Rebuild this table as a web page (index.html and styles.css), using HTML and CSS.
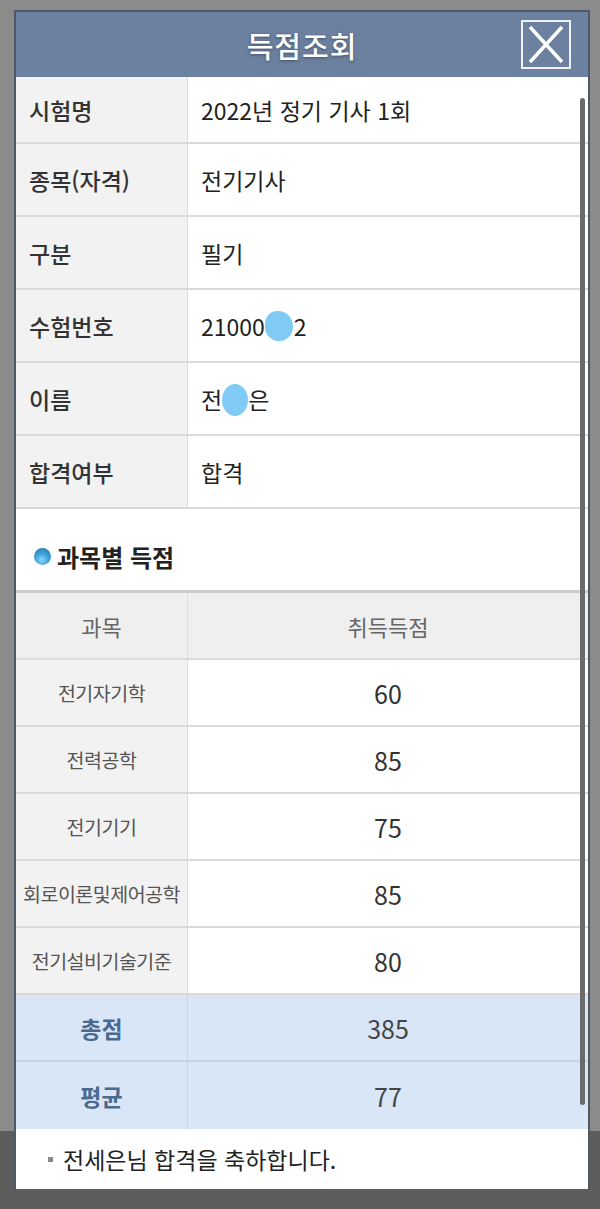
FILE: index.html
```html
<!DOCTYPE html>
<html lang="ko">
  <head>
    <meta charset="UTF-8" />
    <meta name="viewport" content="width=device-width, initial-scale=1.0" />
    <title>득점조회</title>
    <link rel="stylesheet" href="styles.css">
  </head>
  <body>
    <div class="backdrop">
      <div class="modal">
        <div class="modal-header">
          <span></span>
          <h1>득점조회</h1>
          <button class="close" type="button" aria-label="닫기">
            <svg width="50" height="49" viewBox="0 0 50 49">
              <rect x="1" y="1" width="48" height="47" fill="none" stroke="#eef1f6" stroke-width="2" />
              <path d="M9 7 L41 42 M41 7 L9 42" stroke="#ffffff" stroke-width="3.5" />
            </svg>
          </button>
        </div>

        <div class="modal-body">
          <div class="info">
            <div class="info-row first">
              <div class="label">시험명</div>
              <div class="value">2022년 정기 기사 1회</div>
            </div>
            <div class="info-row">
              <div class="label">종목(자격)</div>
              <div class="value">전기기사</div>
            </div>
            <div class="info-row">
              <div class="label">구분</div>
              <div class="value">필기</div>
            </div>
            <div class="info-row">
              <div class="label">수험번호</div>
              <div class="value">21000<span class="blob num"></span>2</div>
            </div>
            <div class="info-row">
              <div class="label">이름</div>
              <div class="value">전<span class="blob name"></span>은</div>
            </div>
            <div class="info-row">
              <div class="label">합격여부</div>
              <div class="value">합격</div>
            </div>
          </div>

          <div class="section-title">
            <span class="ball"></span>
            <h2>과목별 득점</h2>
          </div>

          <div class="scores">
            <div class="score-row head">
              <div class="subject">과목</div>
              <div class="point">취득득점</div>
            </div>
            <div class="score-row">
              <div class="subject">전기자기학</div>
              <div class="point">60</div>
            </div>
            <div class="score-row">
              <div class="subject">전력공학</div>
              <div class="point">85</div>
            </div>
            <div class="score-row">
              <div class="subject">전기기기</div>
              <div class="point">75</div>
            </div>
            <div class="score-row">
              <div class="subject">회로이론및제어공학</div>
              <div class="point">85</div>
            </div>
            <div class="score-row">
              <div class="subject">전기설비기술기준</div>
              <div class="point">80</div>
            </div>
            <div class="score-row total">
              <div class="subject">총점</div>
              <div class="point">385</div>
            </div>
            <div class="score-row total">
              <div class="subject">평균</div>
              <div class="point">77</div>
            </div>
          </div>

          <p class="message"><span class="bullet"></span>전세은님 합격을 축하합니다.</p>
        </div>

        <div class="scrollbar"></div>
      </div>
    </div>
  </body>
</html>
```

FILE: styles.css
```css
* {
  margin: 0;
  padding: 0;
  box-sizing: border-box;
}
body {
  font-family: "Noto Sans CJK KR", "Noto Sans", sans-serif;
  height: 1209px;
  overflow: hidden;
  background: linear-gradient(#8b8b8b 0, #8b8b8b 1131px, #5d5d5d 1131px);
}
.backdrop {
  padding: 10px 0 0 14px;
}
.modal {
  position: relative;
  width: 576px;
  border: 2px solid #4f5866;
  border-bottom: none;
  background-color: #fff;
}
.modal-header {
  display: grid;
  grid-template-columns: 1fr auto 1fr;
  align-items: center;
  height: 65px;
  background-color: #6c809f;
}
.modal-header h1 {
  font-size: 29px;
  font-weight: 500;
  color: #fff;
  text-shadow: 0 1px 3px rgba(30, 40, 60, 0.55);
  letter-spacing: 1px;
}
.close {
  justify-self: end;
  margin-right: 17px;
  width: 50px;
  height: 49px;
  border: none;
  background: none;
  display: flex;
}

/* info table */
.info-row {
  display: grid;
  grid-template-columns: 172px 1fr;
  height: 73px;
  border-bottom: 2px solid #dadada;
}
.info-row.first {
  height: 67px;
}
.label {
  display: flex;
  align-items: center;
  padding-left: 13px;
  background-color: #f2f2f2;
  border-right: 1px solid #dcdcdc;
  font-size: 23px;
  font-weight: 500;
  color: #333;
}
.value {
  display: flex;
  align-items: center;
  padding-left: 13px;
  font-size: 23px;
  color: #222;
}
.blob {
  display: inline-block;
  background-color: #80cbf6;
  border-radius: 50%;
}
.blob.num {
  width: 28px;
  height: 30px;
  margin: 0 1px 0 0;
  border-radius: 45% 55% 50% 50%;
}
.blob.name {
  width: 26px;
  height: 32px;
  margin-top: 3px;
}

/* section title */
.section-title {
  display: flex;
  align-items: center;
  height: 81px;
  padding: 14px 0 0 18px;
  gap: 6px;
}
.ball {
  width: 17px;
  height: 17px;
  border-radius: 50%;
  background: radial-gradient(circle at 45% 70%, #8ad6fa 0, #3e9fd8 45%, #1d6fa8 100%);
}
.section-title h2 {
  font-size: 24px;
  font-weight: 700;
  color: #222;
}

/* score table */
.scores {
  border-top: 3px solid #cdcdcd;
}
.score-row {
  display: grid;
  grid-template-columns: 172px 1fr;
  height: 67px;
  border-bottom: 2px solid #dadada;
}
.score-row.head {
  background-color: #efefef;
}
.subject,
.point {
  display: flex;
  align-items: center;
  justify-content: center;
}
.subject {
  background-color: #f2f2f2;
  border-right: 1px solid #dcdcdc;
  font-size: 19.5px;
  letter-spacing: -0.5px;
  color: #555;
}
.point {
  font-size: 25px;
  color: #333;
}
.head .subject,
.head .point {
  font-size: 22px;
  letter-spacing: 0;
  color: #666;
  background-color: #efefef;
}
.total {
  background-color: #d9e6f8;
  border-bottom-color: #c6d3e4;
}
.total .subject {
  background-color: #d9e6f8;
  border-right-color: #c6d3e4;
  font-size: 23px;
  font-weight: 700;
  letter-spacing: 0;
  color: #4b6a8f;
}
.total .point {
  color: #444;
}
.total:last-child {
  border-bottom: none;
}

.message {
  display: flex;
  align-items: center;
  height: 60px;
  padding-left: 32px;
  font-size: 23px;
  color: #222;
}
.bullet {
  width: 5px;
  height: 5px;
  margin-right: 10px;
  background-color: #8a8a8a;
}

.scrollbar {
  position: absolute;
  top: 86px;
  right: 3px;
  width: 5px;
  height: 1007px;
  border-radius: 3px;
  background-color: #6a6a6a;
}
```
